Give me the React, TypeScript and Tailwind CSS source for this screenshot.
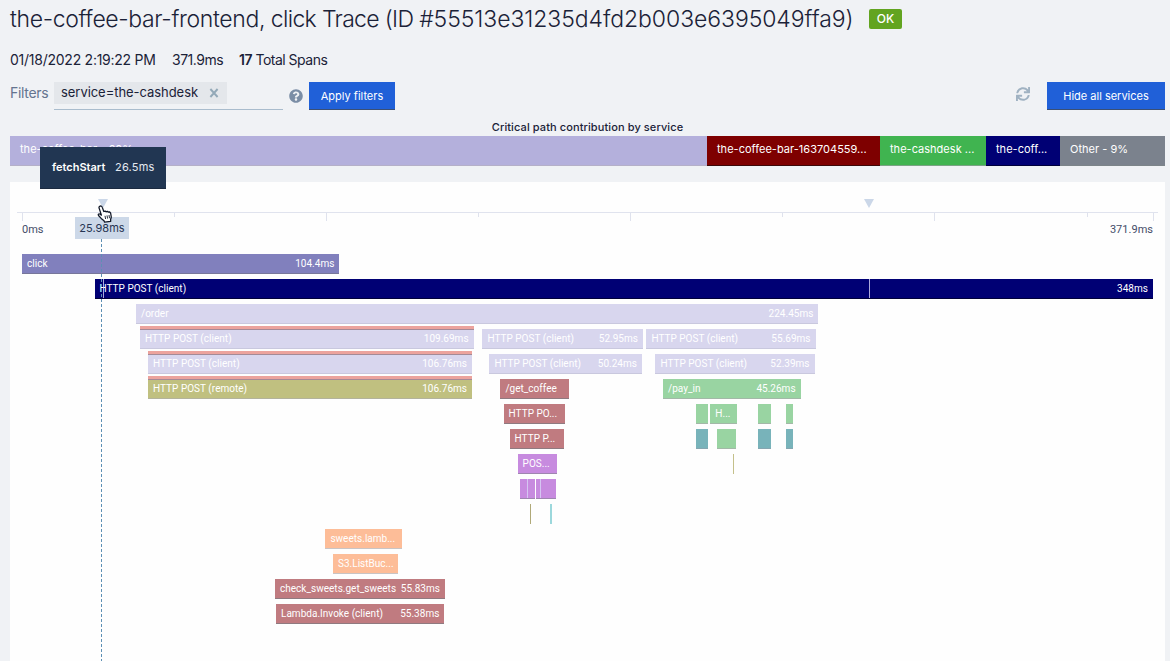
import React from "react";
import { FaSync, FaQuestionCircle } from "react-icons/fa";

type Bar = {
  from: number;
  to: number;
  look: string;
  label?: string;
  time?: string;
  error?: boolean;
  marks?: number[];
};

const ORIGIN = 22;

const lilac = "bg-[#d8d6ee] border-[#c9c8de] text-white";
const rust = "bg-[#c07b80] border-[#8f7a80] text-white";
const green = "bg-[#99d4a2] border-[#a3b8a8] text-white";
const teal = "bg-[#78b3ba] border-[#86a5b0] text-white";
const violet = "bg-[#c78bdf] border-[#9f86b0] text-white";
const peach = "bg-[#fdbd98] border-[#c9c4c4] text-white";
const olive = "bg-[#c0c080] border-[#b3b39c] text-white";

const rows: Bar[][] = [
  [{ from: 22, to: 339.4, look: "bg-[#8180bd] border-[#77769a] text-white", label: "click", time: "104.4ms" }],
  [{ from: 94.5, to: 1153, look: "bg-[#000074] border-[#00003a] text-white", label: "HTTP POST (client)", time: "348ms", marks: [103, 869] }],
  [{ from: 136, to: 818.4, look: lilac, label: "/order", time: "224.45ms" }],
  [
    { from: 140, to: 473.6, look: lilac, label: "HTTP POST (client)", time: "109.69ms", error: true },
    { from: 482.4, to: 643, look: lilac, label: "HTTP POST (client)", time: "52.95ms" },
    { from: 646.4, to: 815.6, look: lilac, label: "HTTP POST (client)", time: "55.69ms" },
  ],
  [
    { from: 148, to: 472, look: lilac, label: "HTTP POST (client)", time: "106.76ms", error: true },
    { from: 489.4, to: 642, look: lilac, label: "HTTP POST (client)", time: "50.24ms" },
    { from: 655.4, to: 814.6, look: lilac, label: "HTTP POST (client)", time: "52.39ms" },
  ],
  [
    { from: 148, to: 472, look: olive, label: "HTTP POST (remote)", time: "106.76ms", error: true },
    { from: 500.4, to: 569.4, look: rust, label: "/get_coffee" },
    { from: 663, to: 800.6, look: green, label: "/pay_in", time: "45.26ms" },
  ],
  [
    { from: 503.6, to: 565, look: rust, label: "HTTP PO..." },
    { from: 695.6, to: 708, look: green },
    { from: 710.4, to: 737, look: green, label: "H..." },
    { from: 758, to: 771.4, look: green },
    { from: 786, to: 793.4, look: green },
  ],
  [
    { from: 509.6, to: 564, look: rust, label: "HTTP P..." },
    { from: 695.6, to: 708, look: teal },
    { from: 717.4, to: 736, look: green },
    { from: 758, to: 771.4, look: teal },
    { from: 786, to: 793.4, look: teal },
  ],
  [
    { from: 517.6, to: 557, look: violet, label: "POS..." },
    { from: 733, to: 734, look: "bg-[#c4c08a] border-[#c4c08a]" },
  ],
  [
    { from: 519.6, to: 534.6, look: violet, marks: [526.6] },
    { from: 536, to: 556, look: violet, marks: [540] },
  ],
  [
    { from: 530, to: 531, look: "bg-[#b0a978] border-[#b0a978]" },
    { from: 550, to: 552, look: "bg-[#9cd8dc] border-[#9cd8dc]" },
  ],
  [{ from: 325.4, to: 402, look: peach, label: "sweets.lamb..." }],
  [{ from: 333, to: 398, look: peach, label: "S3.ListBuc..." }],
  [{ from: 275, to: 445, look: rust, label: "check_sweets.get_sweets", time: "55.83ms" }],
  [{ from: 276, to: 444.4, look: rust, label: "Lambda.Invoke (client)", time: "55.38ms" }],
];

const ticks = [
  { gap: 5, tall: true },
  { gap: 151, tall: false },
  { gap: 151, tall: true },
  { gap: 151, tall: false },
  { gap: 151, tall: true },
  { gap: 151, tall: false },
  { gap: 151, tall: true },
  { gap: 152, tall: false },
  { gap: 65, tall: true },
];

function Span({ bar, previousEnd }: { bar: Bar; previousEnd: number }) {
  return (
    <div
      className={`relative h-5 shrink-0 border-b ${bar.look}`}
      style={{ marginLeft: bar.from - previousEnd, width: bar.to - bar.from }}
    >
      {bar.error && <div className="absolute inset-x-0 -top-[3px] h-[4px] border-b border-[#a58a96] bg-[#eca39d]" />}
      {bar.marks?.map((x) => (
        <div key={x} className="absolute top-0 h-full w-px bg-[#d8d4f6]/80" style={{ left: x - bar.from }} />
      ))}
      {bar.label && (
        <div className="flex h-[19px] items-center justify-between whitespace-nowrap px-[5px] font-[Roboto,sans-serif] text-[10px] leading-[20px] tracking-[0.02px]">
          <span>{bar.label}</span>
          {bar.time && <span>{bar.time}</span>}
        </div>
      )}
    </div>
  );
}

function Hand() {
  return (
    <svg className="absolute left-[97px] top-[205px] h-[18px] w-[16px]" viewBox="0 0 16 18">
      <path
        d="M3 1.2C4.2.7 5 1.3 5.3 2.4L6.8 6.5 8.2 6.1 9 6.8 10.3 6.3 11.2 7.1 12.4 6.8 13.6 8 14.3 12 13.6 14.5 13.7 16.4 7.6 17.2 7 15.7 4.2 13.4 1.5 10.5C.8 9.5 1.6 8.6 2.8 9L4.4 10.1 2.1 3.1C1.8 2.2 2.1 1.5 3 1.2Z"
        fill="#fff"
        stroke="#111827"
        strokeWidth="1.3"
        strokeLinejoin="round"
      />
      <path d="M8 10.8l.6 3.2M10 10.4l.6 3.2M12 10l.5 3.2" stroke="#111827" strokeWidth=".9" />
    </svg>
  );
}

export default function App() {
  return (
    <div className="relative h-[661px] w-[1170px] overflow-hidden bg-[#f0f2f5] font-[Inter,sans-serif] text-[#1b2238]">
      <header className="flex h-[38px] items-center pl-[10px]">
        <h1 className="w-[859px] whitespace-nowrap text-[23px] font-light leading-[38px]">
          <span className="tracking-[-0.36px]">the-coffee-bar-frontend,</span>
          <span className="tracking-[-0.67px]"> click Trace (ID </span>
          <span className="tracking-[-0.07px]">#55513e31235d4fd2b003e6395049ffa9)</span>
        </h1>
        <span className="flex h-5 w-[33px] items-center justify-center rounded-[2px] bg-[#62a420] text-[12px] font-medium text-white">OK</span>
      </header>

      <div className="mt-[11px] flex h-[20px] items-center whitespace-nowrap pl-[10px] text-[14px] tracking-[-0.25px]">
        <span className="w-[162px]">01/18/2022 2:19:22 PM</span>
        <span className="w-[67px] tracking-[-0.5px]">371.9ms</span>
        <span className="tracking-[-0.5px]"><b className="font-semibold">17</b> Total Spans</span>
      </div>

      <div className="mt-[13px] flex h-[28px] pl-[10px] pr-[5px]">
        <span className="w-[44px] text-[14px] leading-[22px] tracking-[-0.3px] text-[#64748f]">Filters</span>
        <div className="h-[28px] w-[229px] border-b border-[#a9bccd]">
          <div className="flex h-[22px] w-[173px] items-center justify-between bg-[#e4e7eb] pl-[7px] pr-[8px] text-[13px] tracking-[-0.05px]">
            <span>service=the-cashdesk</span>
            <svg className="h-[10px] w-[10px]" viewBox="0 0 10 10"><path d="M1.4 1l7.2 8M8.6 1L1.4 9" stroke="#93a9b8" strokeWidth="1.9" /></svg>
          </div>
        </div>
        <FaQuestionCircle className="ml-[6px] mt-[7px] h-[14px] w-[14px] text-[#7b8ea6]" />
        <button className="ml-[6px] h-[28px] w-[86px] border-b border-[#3a4f74] bg-[#2060d8] pt-px text-[11px] text-white">Apply filters</button>
        <FaSync className="ml-auto mr-[17px] mt-[5px] h-[14px] w-[14px] text-[#a0b2c2]" />
        <button className="h-[28px] w-[118px] border-b border-[#3a4f74] bg-[#2060d8] pt-px text-[11px] text-white">Hide all services</button>
      </div>

      <div className="ml-[10px] flex h-[26px] w-[1155px] items-end justify-center text-[11px] font-medium leading-[18px] tracking-[0.1px]">Critical path contribution by service</div>
      <div className="ml-[10px] flex h-[30px] w-[1155px] whitespace-nowrap text-[11px] leading-[26px] tracking-[0.02px] text-white">
        <div className="w-[697px] border-b border-[#b5b0c8] bg-[#b4b0dc] pl-[10px]">the-coffee-bar - 60%</div>
        <div className="w-[173px] border-b border-[#3c0808] bg-[#7e0000] pl-[10px]">the-coffee-bar-163704559...</div>
        <div className="w-[106px] border-b border-[#7aa384] bg-[#40b450] pl-[10px]">the-cashdesk ...</div>
        <div className="w-[74px] border-b border-[#00003a] bg-[#000074] pl-[10px]">the-coff...</div>
        <div className="w-[105px] border-b border-[#7c8488] bg-[#7b828d] pl-[10px]">Other - 9%</div>
      </div>

      <main className="ml-[10px] mt-4 h-[479px] w-[1155px] bg-[#fefefe]">
        <div className="flex h-[30px] items-end pb-[4px]">
          <svg className="ml-[88px] h-[9px] w-[10px]" viewBox="0 0 10 9"><path d="M0 0h10L5 9z" fill="#cbd7e8" /></svg>
          <svg className="ml-[756px] h-[9px] w-[10px]" viewBox="0 0 10 9"><path d="M0 0h10L5 9z" fill="#cbd7e8" /></svg>
        </div>
        <div className="ml-[7px] flex h-[9px] w-[1141px] items-start border-t border-[#e0e3ee]">
          {ticks.map((t, i) => (
            <div key={i} className={t.tall ? "h-[8px] w-px shrink-0 bg-[#dfe2ed]" : "h-[4px] w-px shrink-0 bg-[#dfe2ed]"} style={{ marginLeft: t.gap }} />
          ))}
        </div>
        <div className="flex h-[33px] justify-between pl-[12px] pr-[12px] font-[Roboto,sans-serif] text-[11px] leading-[18px] tracking-[0.02px] text-[#444d68]">
          <span>0ms</span>
          <span>371.9ms</span>
        </div>
        <div className="flex flex-col gap-[5px] pl-[12px]">
          {rows.map((row, i) => (
            <div key={i} className="flex h-5">
              {row.map((bar, j) => (
                <Span key={bar.from} bar={bar} previousEnd={j ? row[j - 1].to : ORIGIN} />
              ))}
            </div>
          ))}
        </div>
      </main>

      <div className="absolute left-[101px] top-[239px] h-[422px] w-px bg-[repeating-linear-gradient(#5d8fb4_0_3px,transparent_3px_5px)]" />
      <div className="absolute left-[75px] top-[217px] flex h-[22px] w-[54px] items-center justify-center bg-[#ccd8e8] text-[11px] text-[#263452]">25.98ms</div>
      <div className="absolute left-[40px] top-[147px] flex h-[42px] w-[126px] items-center border-b border-[#1b2a40] bg-[#213652] pl-3 text-[11px] text-[#e4e9f0]">
        <b className="w-[63px] font-semibold text-white">fetchStart</b>
        <span className="tracking-[0.2px]">26.5ms</span>
      </div>
      <Hand />
    </div>
  );
}
